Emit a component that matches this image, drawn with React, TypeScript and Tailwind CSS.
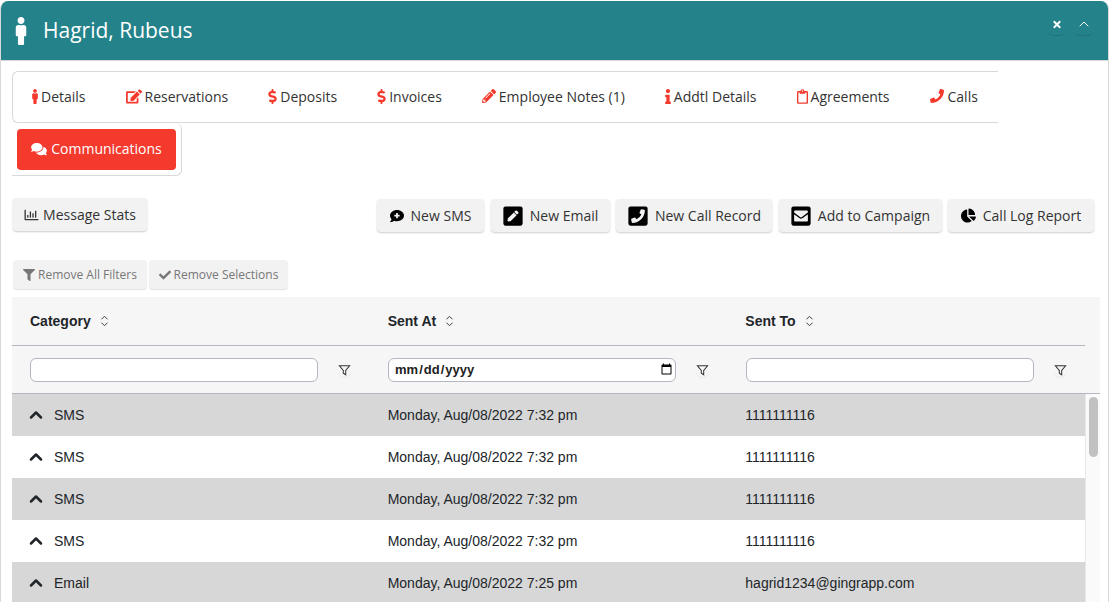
import { ChevronUp } from 'lucide-react'
import type { IconType } from 'react-icons'
import {
  FaMale,
  FaEdit,
  FaDollarSign,
  FaPencilAlt,
  FaInfo,
  FaRegClipboard,
  FaPhone,
  FaComments,
  FaRegChartBar,
  FaCommentMedical,
  FaPenSquare,
  FaPhoneSquareAlt,
  FaEnvelopeSquare,
  FaChartPie,
  FaFilter,
  FaCheck,
  FaTimes,
} from 'react-icons/fa'

type Tab = { label: string; icon: IconType; iconClass: string }

const tabs: Tab[] = [
  { label: 'Details', icon: FaMale, iconClass: 'w-[6px] h-[15px] mr-[3px]' },
  { label: 'Reservations', icon: FaEdit, iconClass: 'w-[16px] h-[15px] mr-[3px]' },
  { label: 'Deposits', icon: FaDollarSign, iconClass: 'w-[9px] h-[15px] mr-[3px]' },
  { label: 'Invoices', icon: FaDollarSign, iconClass: 'w-[9px] h-[15px] mr-[3px]' },
  { label: 'Employee Notes (1)', icon: FaPencilAlt, iconClass: 'w-[14px] h-[14px] mr-[3px]' },
  { label: 'Addtl Details', icon: FaInfo, iconClass: 'w-[6px] h-[15px] mr-[3px]' },
  { label: 'Agreements', icon: FaRegClipboard, iconClass: 'w-[11px] h-[15px] mr-[3px]' },
  { label: 'Calls', icon: FaPhone, iconClass: 'w-[14px] h-[14px] mr-[4px]' },
]

const actions: { label: string; icon: IconType; iconClass: string; width: string }[] = [
  { label: 'New SMS', icon: FaCommentMedical, iconClass: 'w-[14px] h-[14px] mr-[7px]', width: 'w-[107px]' },
  { label: 'New Email', icon: FaPenSquare, iconClass: 'w-[22px] h-[22px] mr-[6px]', width: 'w-[119px]' },
  { label: 'New Call Record', icon: FaPhoneSquareAlt, iconClass: 'w-[22px] h-[22px] mr-[6px] -scale-x-100', width: 'w-[156px]' },
  { label: 'Add to Campaign', icon: FaEnvelopeSquare, iconClass: 'w-[22px] h-[22px] mr-[6px]', width: 'w-[163px]' },
  { label: 'Call Log Report', icon: FaChartPie, iconClass: 'w-[15px] h-[15px] mr-[7px]', width: 'w-[146px]' },
]

const rows = [
  { category: 'SMS', sentAt: 'Monday, Aug/08/2022 7:32 pm', sentTo: '1111111116' },
  { category: 'SMS', sentAt: 'Monday, Aug/08/2022 7:32 pm', sentTo: '1111111116' },
  { category: 'SMS', sentAt: 'Monday, Aug/08/2022 7:32 pm', sentTo: '1111111116' },
  { category: 'SMS', sentAt: 'Monday, Aug/08/2022 7:32 pm', sentTo: '1111111116' },
  { category: 'Email', sentAt: 'Monday, Aug/08/2022 7:25 pm', sentTo: 'hagrid1234@gingrapp.com' },
]

const SortIcon = () => (
  <svg viewBox="0 0 10 14" className="w-[9px] h-[12px] ml-[9px]" fill="none" stroke="#333" strokeWidth="1.1">
    <path d="M1.5 5 5 1.5 8.5 5" />
    <path d="M1.5 9 5 12.5 8.5 9" />
  </svg>
)

const FilterOutline = () => (
  <svg viewBox="0 0 14 14" className="w-[13px] h-[13px]" fill="none" stroke="#333" strokeWidth="1.1">
    <path d="M1.5 2h11L8.3 7v4.6L5.7 10V7z" />
  </svg>
)

const FilterCell = ({ type = 'text' }: { type?: string }) => (
  <div className="w-[358px] flex items-center pl-[18px]">
    <input
      type={type}
      className={`w-[288px] h-[24px] bg-white border border-[#b4b7c2] rounded-[6px] text-[13px] font-bold text-[#222] font-['Liberation_Sans',sans-serif] ${
        type === 'date' ? 'pl-[5px] pr-0' : 'px-[7px]'
      }`}
    />
    <div className="ml-[20px] mt-px rounded-full shadow-[0_1px_0_rgba(0,0,0,0.06)]">
      <FilterOutline />
    </div>
  </div>
)

export default function App() {
  return (
    <div className="w-[1109px] h-[602px] overflow-hidden bg-white font-['Open_Sans',sans-serif] text-[#333] pt-px pl-px">
      <div className="w-[1107px] h-[601px] overflow-hidden border-r border-l border-[#d9d9d9] rounded-t-[8px] -ml-px box-content">
        {/* Header */}
        <div className="h-[59px] bg-[#24828a] flex items-center justify-between text-white">
          <div className="flex items-center">
            <FaMale className="w-[14px] h-[28px] ml-[13px]" />
            <span className="ml-[15px] text-[21px] leading-none">Hagrid, Rubeus</span>
          </div>
          <div className="flex items-start mr-[15px] -mt-[11px]">
            <button className="w-[17px] h-[21px] flex justify-center pt-[4px] rounded-b-[5px] border-b border-[#1f737a]">
              <FaTimes className="w-[10px] h-[11px]" />
            </button>
            <button className="ml-[9px] w-[19px] h-[21px] flex justify-center pt-[1px] rounded-b-[5px] border-b border-[#1f737a]">
              <ChevronUp className="w-[16px] h-[16px]" strokeWidth={1.5} />
            </button>
          </div>
        </div>
        <div className="h-px bg-[#d9d9d9]" />

        <div className="pl-[11px] pt-[10px]">
          {/* Tabs */}
          <div className="w-[986px] h-[52px] pb-[2px] flex items-center border border-r-0 border-[#d9d9d9] rounded-l-[6px] text-[14px]">
            <div className="flex items-center -ml-px">
              {tabs.map((tab) => (
                <div key={tab.label} className="flex items-center px-[20px] whitespace-nowrap">
                  <tab.icon className={`${tab.iconClass} text-[#f4392d] shrink-0`} />
                  <span>{tab.label}</span>
                </div>
              ))}
            </div>
          </div>
          <div className="w-[170px] h-[53px] border border-t-0 border-l-0 border-[#d9d9d9] rounded-r-[6px] pl-[5px] pt-[6px]">
            <button className="w-[159px] h-[41px] pb-[2px] bg-[#f4392d] text-white rounded-[4px] flex items-center justify-center text-[14px]">
              <FaComments className="w-[16px] h-[14px] mr-[4px]" />
              Communications
            </button>
          </div>

          {/* Action buttons */}
          <div className="flex items-start justify-between mt-[22px] w-[1082px] pl-px">
            <button className="w-[134px] h-[33px] bg-[#f2f2f2] rounded-[4px] shadow-[0_1px_2px_rgba(0,0,0,0.2)] flex items-center justify-center text-[14px]">
              <FaRegChartBar className="w-[15px] h-[14px] mr-[4px]" />
              Message Stats
            </button>
            <div className="flex gap-[6.5px] mt-px">
              {actions.map((a) => (
                <button
                  key={a.label}
                  className={`${a.width} h-[33px] bg-[#f2f2f2] rounded-[4px] shadow-[0_1px_2px_rgba(0,0,0,0.2)] flex items-center justify-center text-[14px]`}
                >
                  <a.icon className={`${a.iconClass} text-black`} />
                  {a.label}
                </button>
              ))}
            </div>
          </div>

          {/* Filter buttons */}
          <div className="flex gap-[2px] mt-[28px] pl-px text-[12px] text-[#777]">
            <button className="w-[134px] h-[29px] bg-[#f2f2f2] rounded-[4px] shadow-[0_1px_1px_rgba(0,0,0,0.12)] flex items-center justify-center">
              <FaFilter className="w-[12px] h-[12px] mr-[3px]" />
              Remove All Filters
            </button>
            <button className="w-[139px] h-[29px] bg-[#f2f2f2] rounded-[4px] shadow-[0_1px_1px_rgba(0,0,0,0.12)] flex items-center justify-center">
              <FaCheck className="w-[12px] h-[12px] mr-[3px]" />
              Remove Selections
            </button>
          </div>

          {/* Table */}
          <div className="w-[1088px] mt-[8px] font-['Liberation_Sans',sans-serif] text-[14px] text-[#212529]">
            <div className="bg-[#f6f6f6]">
              <div className="w-[1073px] h-[49px] flex items-center border-b border-[#b4b7c2] font-bold">
                {['Category', 'Sent At', 'Sent To'].map((h) => (
                  <div key={h} className="w-[358px] pl-[18px] flex items-center">
                    {h}
                    <SortIcon />
                  </div>
                ))}
              </div>
              <div className="h-[48px] flex items-center border-b border-[#b4b7c2]">
                <FilterCell />
                <FilterCell type="date" />
                <FilterCell />
              </div>
            </div>
            <div className="flex">
              <div className="w-[1073px]">
                {rows.map((row, i) => (
                  <div key={i} className={`h-[42px] flex items-center ${i % 2 === 0 ? 'bg-[#d7d7d7]' : 'bg-white'}`}>
                    <div className="w-[358px] pl-[14px] flex items-center">
                      <ChevronUp className="w-[20px] h-[20px]" strokeWidth={3} />
                      <span className="ml-[8px]">{row.category}</span>
                    </div>
                    <div className="w-[358px] pl-[18px]">{row.sentAt}</div>
                    <div className="w-[358px] pl-[18px]">{row.sentTo}</div>
                  </div>
                ))}
              </div>
              <div className="w-[15px] bg-[#fafafa] border-l border-[#e8e8e8] px-[2px] pt-[3px]">
                <div className="w-[9px] h-[60px] mx-auto bg-[#c1c1c1] rounded-full" />
              </div>
            </div>
          </div>
        </div>
      </div>
    </div>
  )
}
